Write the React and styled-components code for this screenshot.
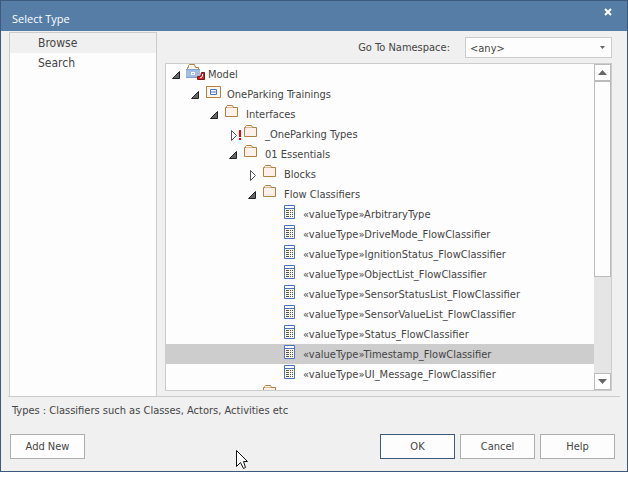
import React from "react";
import styled, { createGlobalStyle } from "styled-components";

const UI_FONT = '"DejaVu Sans Condensed", "DejaVu Sans", "Liberation Sans", sans-serif';
const SEGOE_LIKE = '"Open Sans", "Noto Sans", sans-serif';

const GlobalStyle = createGlobalStyle`
  *, *::before, *::after { box-sizing: border-box; }
  body { margin: 0; background: #fff; }
  button, select { font: inherit; color: inherit; }
`;

const Dialog = styled.main`
  position: relative;
  display: flex;
  flex-direction: column;
  border: 1px solid #3d5a7d;
  background: #f0f0f0;
  color: #444;
  font-family: ${UI_FONT};
  font-size: 11px;
`;

const TitleBar = styled.header`
  display: flex;
  align-items: center;
  justify-content: space-between;
  height: 30px;
  padding: 0 13px 0 11px;
  background: #557da6;
  color: #fff;
`;

const Title = styled.h1`
  margin: 0;
  padding-top: 5px;
  font-family: ${SEGOE_LIKE};
  font-size: 11px;
  font-weight: 400;
`;

const CloseButton = styled.button`
  display: flex;
  width: 12px;
  height: 12px;
  padding: 2px;
  margin-bottom: 8px;
  border: 0;
  background: none;
`;

const Body = styled.div`
  display: flex;
  gap: 8px;
  margin: 0 7px;
  padding: 1px 8px 0 1px;
  border-bottom: 1px solid #ccc;
`;

const Sidebar = styled.nav`
  flex: 0 0 148px;
  border: 1px solid #ccc;
  border-bottom: 0;
  background: #fdfdfd;
  font-size: 12px;
`;

const SidebarItem = styled.button`
  display: block;
  width: 100%;
  height: 20px;
  padding: 0 0 0 28px;
  border: 0;
  text-align: left;
  background: ${(p) => (p.$active ? "#f0f0f0" : "transparent")};
`;

const Content = styled.section`
  flex: 1;
  min-width: 0;
  display: flex;
  flex-direction: column;
  gap: 5px;
  padding: 5px 0;
`;

const NamespaceRow = styled.div`
  display: flex;
  align-items: center;
  justify-content: flex-end;
  gap: 15px;
`;

const NamespaceLabel = styled.label`
  line-height: 18px;
`;

const SelectFrame = styled.div`
  display: flex;
  align-items: center;
  width: 147px;
  height: 21px;
  padding-right: 6px;
  border: 1px solid #ccc;
  background: #fdfdfd;
`;

const NamespaceSelect = styled.select`
  appearance: none;
  flex: 1;
  height: 19px;
  padding: 1px 4px 0;
  border: 0;
  background: transparent;
`;

const TreeFrame = styled.div`
  display: flex;
  height: 328px;
  border: 1px solid #ccc;
  background: #fdfdfd;
`;

const Tree = styled.ul`
  flex: 1;
  min-width: 0;
  margin: 0;
  padding: 0;
  overflow: hidden;
  list-style: none;
`;

const TreeRow = styled.li`
  display: flex;
  height: 20px;
  padding-left: ${(p) => 5 + p.$level * 19}px;
  line-height: 22px;
  white-space: nowrap;
  background: ${(p) => (p.$selected ? "#cdcdcd" : "transparent")};
`;

const ToggleCell = styled.span`
  flex: 0 0 15px;
  height: 20px;
`;

const IconCell = styled.span`
  flex: 0 0 22px;
  height: 20px;
`;

const Glyph = styled.svg`
  display: block;
  flex: none;
`;

const ScrollBar = styled.div`
  flex: 0 0 17px;
  display: flex;
  flex-direction: column;
  background: #e5e5e5;
`;

const ScrollButton = styled.button`
  display: flex;
  align-items: center;
  justify-content: center;
  height: 17px;
  padding: 0;
  border: 1px solid #bbb;
  background: #fdfdfd;
`;

const ScrollTrack = styled.div`
  flex: 1;
`;

const ScrollThumb = styled.div`
  height: 67%;
  border: 1px solid #bbb;
  background: #fdfdfd;
`;

const Description = styled.p`
  margin: 0;
  padding: 5px 11px 0;
  line-height: 18px;
`;

const Footer = styled.footer`
  display: flex;
  justify-content: space-between;
  padding: 14px 12px 12px 9px;
`;

const ButtonGroup = styled.div`
  display: flex;
  gap: 5px;
`;

const DialogButton = styled.button`
  width: 75px;
  height: 25px;
  padding: 0;
  border: 1px solid ${(p) => (p.$primary ? "#3d5a7d" : "#adadad")};
  background: #fdfdfd;
`;

const Pointer = styled.svg`
  position: absolute;
  left: 235px;
  bottom: 1px;
  pointer-events: none;
`;

function Toggle({ open, alert }) {
  return (
    <Glyph width="15" height="20">
      {open ? (
        <path d="M8.5 7.5V14.5H1.5Z" fill="#666" stroke="#222" />
      ) : (
        <path d="M3.5 6.5V16.5L8.5 11.5Z" fill="#fff" stroke="#555" />
      )}
      {alert && <path d="M11 6h2v7h-2zM11 14h2v2h-2z" fill="#f00" />}
    </Glyph>
  );
}

function FolderIcon() {
  return (
    <Glyph width="22" height="20" fill="none" stroke="#b08040">
      <path d="M1.5 3.5H13.5V12.5H1.5Z" fill="#fdf1ec" />
      <path d="M2.5 3.5V2.5L3.5 1.5H8.5L9.5 3.5" fill="#fdf6ee" />
    </Glyph>
  );
}

function ModelIcon() {
  return (
    <Glyph width="22" height="20" fill="none">
      <path d="M1.5 6V3.5H2.5V1.5L3.5 .5H8.5L9.5 3.5H12.5V6" fill="#fdf6ee" stroke="#b08040" />
      <path d="M0 5h14v9H0z" fill="#a3bde0" />
      <path d="M0 5h14v1H0zM0 13h14v1H0z" fill="#7fa2d0" />
      <path d="M5 8h4v3H5z" fill="#fff" />
      <path d="M6 9h2v1H6z" fill="#a3bde0" />
      <path d="M15.5 8.5H18.5V15.5H11.5V12.5H14.5Z" fill="#e02020" stroke="#701818" />
      <path d="M16.5 10V12.5L14 14" stroke="#fff" />
    </Glyph>
  );
}

function PackageIcon() {
  return (
    <Glyph width="22" height="20" fill="none">
      <path d="M1.5 2.5H15.5V13.5H1.5Z" fill="#fdf6ee" stroke="#b08040" />
      <path d="M5.5 5.5H11.5V10.5H5.5ZM5.5 8H11.5" fill="#fff" stroke="#4a72c0" />
    </Glyph>
  );
}

function ValueTypeIcon() {
  return (
    <Glyph width="22" height="20" fill="none">
      <path d="M3.5 1.5H13.5V14.5H3.5Z" fill="#fffbe6" stroke="#4a72c0" />
      <path d="M4 2h9v2H4z" fill="#fff" />
      <path d="M4 4.5H13" stroke="#4a72c0" />
      <path d="M5 6.5h3m1 0h1m1 0h1M5 8.5h3m1 0h1m1 0h1M5 10.5h3m1 0h1m1 0h1M5 12.5h3m1 0h1m1 0h1" stroke="#555" />
    </Glyph>
  );
}

const ICONS = { model: ModelIcon, package: PackageIcon, folder: FolderIcon, value: ValueTypeIcon };

const value = (name) => ({ level: 5, icon: "value", name: "«valueType»" + name });

const NODES = [
  { level: 0, icon: "model", name: "Model", open: true },
  { level: 1, icon: "package", name: "OneParking Trainings", open: true },
  { level: 2, icon: "folder", name: "Interfaces", open: true },
  { level: 3, icon: "folder", name: "_OneParking Types", open: false, alert: true },
  { level: 3, icon: "folder", name: "01 Essentials", open: true },
  { level: 4, icon: "folder", name: "Blocks", open: false },
  { level: 4, icon: "folder", name: "Flow Classifiers", open: true },
  value("ArbitraryType"),
  value("DriveMode_FlowClassifier"),
  value("IgnitionStatus_FlowClassifier"),
  value("ObjectList_FlowClassifier"),
  value("SensorStatusList_FlowClassifier"),
  value("SensorValueList_FlowClassifier"),
  value("Status_FlowClassifier"),
  { ...value("Timestamp_FlowClassifier"), selected: true },
  value("UI_Message_FlowClassifier"),
  { level: 4, icon: "folder", name: "Signal Interfaces" },
];

function TreeNode({ node }) {
  const Icon = ICONS[node.icon];
  return (
    <TreeRow
      role="treeitem"
      aria-level={node.level + 1}
      aria-expanded={node.open}
      aria-selected={!!node.selected}
      $level={node.level}
      $selected={node.selected}
    >
      <ToggleCell>{node.open !== undefined && <Toggle open={node.open} alert={node.alert} />}</ToggleCell>
      <IconCell>
        <Icon />
      </IconCell>
      {node.name}
    </TreeRow>
  );
}

export default function App() {
  return (
    <Dialog>
      <GlobalStyle />
      <TitleBar>
        <Title>Select Type</Title>
        <CloseButton aria-label="Close">
          <Glyph width="8" height="8" stroke="#fff" strokeWidth="2">
            <path d="M1 1L7 7M7 1L1 7" />
          </Glyph>
        </CloseButton>
      </TitleBar>
      <Body>
        <Sidebar>
          <SidebarItem $active>Browse</SidebarItem>
          <SidebarItem>Search</SidebarItem>
        </Sidebar>
        <Content>
          <NamespaceRow>
            <NamespaceLabel htmlFor="namespace">Go To Namespace:</NamespaceLabel>
            <SelectFrame>
              <NamespaceSelect id="namespace">
                <option>&lt;any&gt;</option>
              </NamespaceSelect>
              <Glyph width="5" height="3" fill="#666">
                <path d="M0 0H5L2.5 3Z" />
              </Glyph>
            </SelectFrame>
          </NamespaceRow>
          <TreeFrame>
            <Tree role="tree">
              {NODES.map((node) => (
                <TreeNode key={node.name} node={node} />
              ))}
            </Tree>
            <ScrollBar>
              <ScrollButton aria-label="Scroll up">
                <Glyph width="9" height="5" fill="#666">
                  <path d="M0 5L4.5 0L9 5Z" />
                </Glyph>
              </ScrollButton>
              <ScrollTrack>
                <ScrollThumb />
              </ScrollTrack>
              <ScrollButton aria-label="Scroll down">
                <Glyph width="9" height="5" fill="#666">
                  <path d="M0 0H9L4.5 5Z" />
                </Glyph>
              </ScrollButton>
            </ScrollBar>
          </TreeFrame>
        </Content>
      </Body>
      <Description>Types : Classifiers such as Classes, Actors, Activities etc</Description>
      <Footer>
        <DialogButton>Add New</DialogButton>
        <ButtonGroup>
          <DialogButton $primary>OK</DialogButton>
          <DialogButton>Cancel</DialogButton>
          <DialogButton>Help</DialogButton>
        </ButtonGroup>
      </Footer>
      <Pointer width="13" height="20">
        <path
          d="M.5 .5V16.5L4.5 12.5L7.5 18.5L9.5 17.5L7.5 11.5H11.5Z"
          fill="#fff"
          stroke="#111"
        />
      </Pointer>
    </Dialog>
  );
}
